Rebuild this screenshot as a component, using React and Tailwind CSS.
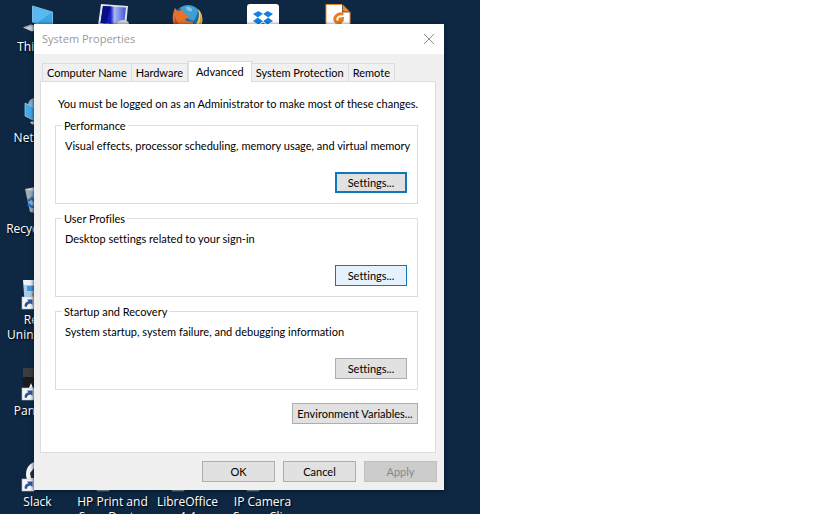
const desk = "'Open Sans','Noto Sans',sans-serif";

function Shortcut() {
  return (
    <g>
      <rect x="0" y="20" width="12" height="12" fill="#f4f6f8" stroke="#b9c2cc" strokeWidth=".6" />
      <path d="M2.500 29.500 C2.500 26 4 24.500 6.500 24.500 L5 22.500 H10.500 V28 L8.800 26.600 C6.500 26.800 5 28 4.800 30 Z" fill="#2c5796" />
    </g>
  );
}

function Icon({ name }) {
  return (
    <svg aria-hidden="true" viewBox="0 0 32 32" className="h-8 w-8 shrink-0 overflow-visible">
      {name === 'pc' && (
        <g>
          <path d="M10.500 2 L30.500 8 V25 L10.500 18 Z" fill="#3aa5e6" stroke="#8fd0f5" strokeWidth=".8" />
          <path d="M11 3 L30 8.500 L15 19 L11 17.500 Z" fill="#58b9f2" />
          <path d="M1 23.500 L9 20.500 L19 24 L10 27.500 Z" fill="#c9d0d6" />
          <path d="M3 23.500 L9 21.500 L15 23.800" stroke="#7e8a94" strokeWidth=".7" fill="none" />
        </g>
      )}
      {name === 'hp' && (
        <g>
          <defs>
            <linearGradient id="screen" x1="0" x2="1">
              <stop offset="0" stopColor="#0a0f8c" />
              <stop offset=".4" stopColor="#1a22c8" />
              <stop offset=".55" stopColor="#aab6f4" />
              <stop offset="1" stopColor="#3c55d8" />
            </linearGradient>
          </defs>
          <path d="M4 0 L31 2 L29 23 L1 21 Z" fill="#dfe4ee" />
          <path d="M6 2 L29 3.500 L27 21 L3.500 19 Z" fill="url(#screen)" />
          <path d="M6 2 L14 2.500 L9 19.500 L3.500 19 Z" fill="#0b0f86" />
          <ellipse cx="26" cy="20" rx="6" ry="4" fill="#cfd5df" />
        </g>
      )}
      {name === 'firefox' && (
        <g>
          <circle cx="16" cy="15.500" r="14.500" fill="#1d6cb0" />
          <path d="M8 4 C14 -1 23 1 27 7 C24 9 25 14 21 17 L13 13 L10 7 Z" fill="#3f9fd2" />
          <path d="M14 3 C17 2 21 4 20 7 C17 8 14 7 14 3 Z" fill="#7cc4e4" />
          <path d="M26 5 C34 13 31 28 17 31 L22 22 C27 18 28 11 26 5 Z" fill="#f6cf4a" />
          <path d="M28 9 C33 17 28 27 21 30 C27 24 29 16 28 9 Z" fill="#e89a2a" />
          <path d="M3 4 L6 7.500 C8 6 10 6 12 6.500 C11 8 11.500 9 13 10 L17 11.500 C17 14 14 14 13 16 C15 18 19 17 21 18 C20 25 15 30 11 29 C2 26 -2 15 3 4 Z" fill="#e8702a" />
          <path d="M3 12 C4 18 8 22 14 23 L11 29 C4 26 1 19 3 12 Z" fill="#c9491c" />
        </g>
      )}
      {name === 'dropbox' && (
        <g>
          <rect x="0" y="0" width="32" height="32" rx="3" fill="#fff" />
          <path d="M11.500 7 L16 10 L11 13.500 L6 10 Z M20.500 7 L26 10 L21 13.500 L16 10 Z M11 13.500 L16 17 L11.500 20.500 L6 17 Z M21 13.500 L26 17 L20.500 20.500 L16 17 Z" fill="#157ee0" />
          <path d="M16 10 L21 13.500 L16 17 L11 13.500 Z" fill="#fff" />
          <path d="M16 18.500 L20.500 21.500 L16 24.500 L11.500 21.500 Z" fill="#157ee0" />
        </g>
      )}
      {name === 'document' && (
        <g>
          <path d="M4 .5 H20 L28 8 V32 H4 Z" fill="#fff" stroke="#e78a35" />
          <path d="M20.500 0 L28.500 8 H20.500 Z" fill="#e78a35" stroke="#3a2a20" strokeWidth=".7" />
          <path d="M21.500 10 C15 9 12 13 13 16.500 C14 19 18.500 18.500 19 15 H16.500" fill="none" stroke="#e87c1e" strokeWidth="3" />
          <path d="M21 13 C21.500 17.500 18 21 13.500 20.500" fill="none" stroke="#e87c1e" strokeWidth="2" />
        </g>
      )}
      {name === 'network' && (
        <g>
          <circle cx="13" cy="10" r="7" fill="#8eb2c6" />
          <path d="M3 8 L11 12 L28 10 V24 L11 25 L3 21 Z" fill="#42aae8" stroke="#9bd7f7" strokeWidth=".7" />
          <path d="M8 27 L18 25 V29 L10 29.500 Z" fill="#d4d9dd" />
        </g>
      )}
      {name === 'bin' && (
        <g>
          <path d="M3 3 H29 L25 29 L8 26 Z" fill="#a6adb3" />
          <path d="M3 3 L14 1 L29 3 L22 8 Z" fill="#d5d9dc" />
          <path d="M6 15 L10 12 L13 16 M8 18 L6 20 M12 21 L8 20" stroke="#1774c5" strokeWidth="2.500" fill="none" />
        </g>
      )}
      {name === 'revo' && (
        <g>
          <path d="M1 4 L28 1 V30 H3 Z" fill="#a9cbea" />
          <path d="M1 3 H28 V8 H2 Z" fill="#e9f3fc" />
          <path d="M5 9 H28 V14 H5 Z" fill="#4595dc" />
          <path d="M10 16 H28 V19 H10 Z" fill="#df9146" />
          <Shortcut />
        </g>
      )}
      {name === 'pandora' && (
        <g>
          <rect x="1" y="0" width="30" height="31" fill="#1a1b1d" />
          <rect x="1" y="0" width="30" height="9" fill="#3b3c3e" />
          <path d="M7 20 L9 15 L11 20 Z" fill="#fff" />
          <Shortcut />
        </g>
      )}
      {name === 'slack' && (
        <g>
          <circle cx="17" cy="15" r="13" fill="#f4f5f6" />
          <path d="M8 14 L13 8 V19 H9 Z" fill="#27313d" />
          <Shortcut />
        </g>
      )}
      {name === 'shortcut' && <Shortcut />}
    </svg>
  );
}

const rows = [
  [['pc', 'This PC'], ['hp', ''], ['firefox', ''], ['dropbox', ''], ['document', '']],
  [['network', 'Network']],
  [['bin', 'Recycle Bin']],
  [['revo', 'Revo Uninstaller']],
  [['pandora', 'Pandora']],
  [['slack', 'Slack'], ['shortcut', 'HP Print and Scan Doctor'], ['shortcut', 'LibreOffice 4.4'], ['shortcut', 'IP Camera Super Cli...']],
];

const base = 'h-[21px] border text-center text-[11px] leading-[19px] whitespace-nowrap';

function Button({ className, children, ...rest }) {
  return <button type="button" className={`${base} ${className}`} {...rest}>{children}</button>;
}

function Group({ title, text, buttonClass }) {
  return (
    <fieldset className="h-[86px] min-w-0 border border-[#dcdcdc] pr-[10px] pl-[9px]">
      <legend className="-ml-[3px] px-[2px] leading-[15px]">{title}</legend>
      <p className="mt-[5px] leading-[15px] whitespace-nowrap">{text}</p>
      <div className="mt-[19px] flex justify-end">
        <Button className={`w-[72px] ${buttonClass}`}>Settings...</Button>
      </div>
    </fieldset>
  );
}

const tabs = ['Computer Name', 'Hardware', 'Advanced', 'System Protection', 'Remote'];

export default function App() {
  return (
    <div className="min-h-screen bg-white">
      <main className="relative h-screen w-full max-w-[480px] overflow-hidden bg-[#0e2742]" style={{ fontFamily: desk }}>
        <div className="flex flex-col pt-1">
          {rows.map((row, i) => (
            <div key={i} className="flex h-[91px] shrink-0">
              {row.map(([icon, label]) => (
                <div key={icon + label} className="flex w-[75px] shrink-0 flex-col items-center gap-[3px] text-center text-[12px] leading-[15px] text-white [text-shadow:1px_1px_2px_#000]">
                  <Icon name={icon} />
                  <span>{label}</span>
                </div>
              ))}
            </div>
          ))}
        </div>

        <section
          aria-label="System Properties"
          className="absolute top-6 left-[34px] w-[410px] bg-[#f0f0f0] text-[11px] text-black shadow-[0_1px_4px_#07162a] [font-variant-ligatures:none]"
          style={{ fontFamily: "Lato,'Liberation Sans',sans-serif" }}
        >
          <header className="flex h-[30px] items-center justify-between bg-white pr-[9px] pl-2 text-[11px] text-[#999]" style={{ fontFamily: desk }}>
            <h1>System Properties</h1>
            <button type="button" aria-label="Close">
              <svg viewBox="0 0 12 12" className="h-3 w-3" fill="none" stroke="#8c8c8c"><path d="M1 1 L11 11 M11 1 L1 11" /></svg>
            </button>
          </header>
          <div className="pt-[7px] pr-2 pl-[6px]">
            <div role="tablist" className="relative flex h-5 items-end pl-[2px]">
              {tabs.map((t) => (
                <button
                  key={t}
                  type="button"
                  role="tab"
                  aria-selected={t === 'Advanced'}
                  className={t === 'Advanced'
                    ? '-mb-px h-[21px] border border-b-0 border-[#dcdcdc] bg-white px-[7px] leading-[18px] whitespace-nowrap'
                    : 'h-[18px] border border-l-0 border-b-0 border-[#dcdcdc] bg-[#f0f0f0] px-1 leading-[17px] whitespace-nowrap first:border-l'}
                >
                  {t}
                </button>
              ))}
            </div>
            <div role="tabpanel" className="h-[372px] border border-[#dcdcdc] bg-white pt-[14px] pr-[17px] pl-[14px]">
              <p className="pl-[3px] leading-[15px] whitespace-nowrap">You must be logged on as an Administrator to make most of these changes.</p>
              <div className="mt-[7px] flex flex-col gap-[7px]">
                <Group title="Performance" text="Visual effects, processor scheduling, memory usage, and virtual memory" buttonClass="border-[#1177bd] bg-[#e1e1e1] shadow-[inset_0_0_0_1px_#1177bd]" />
                <Group title="User Profiles" text="Desktop settings related to your sign-in" buttonClass="border-[#1177bd] bg-[#e5f1fb]" />
                <Group title="Startup and Recovery" text="System startup, system failure, and debugging information" buttonClass="border-[#adadad] bg-[#e1e1e1]" />
              </div>
              <div className="mt-[13px] flex justify-end">
                <Button className="w-[126px] border-[#adadad] bg-[#e1e1e1]">Environment Variables...</Button>
              </div>
            </div>
          </div>
          <footer className="flex justify-end gap-2 pt-2 pr-[7px] pb-2">
            <Button className="w-[73px] border-[#adadad] bg-[#e1e1e1]">OK</Button>
            <Button className="w-[73px] border-[#adadad] bg-[#e1e1e1]">Cancel</Button>
            <Button disabled className="w-[73px] border-[#bfbfbf] bg-[#ccc] text-[#888]">Apply</Button>
          </footer>
        </section>
      </main>
    </div>
  );
}
